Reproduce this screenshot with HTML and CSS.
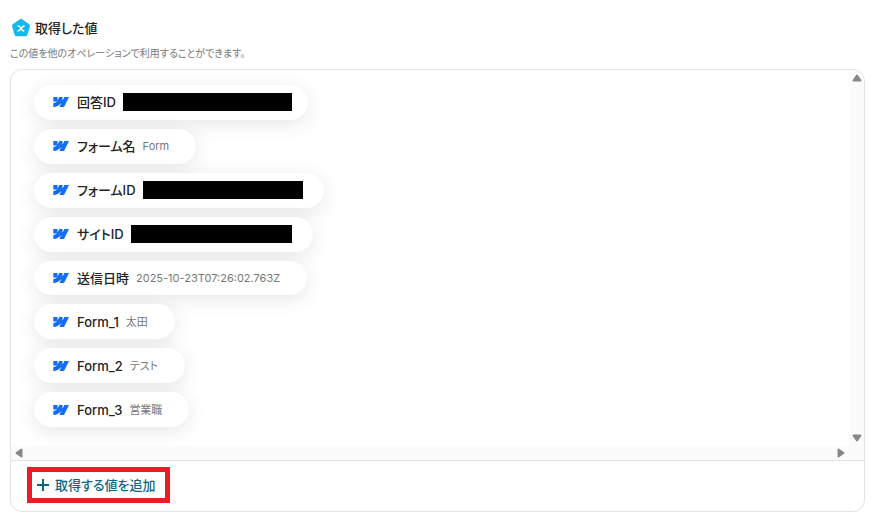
FILE: index.html
```
<!DOCTYPE html>
<html lang="ja">
<head>
    <meta charset="UTF-8">
    <meta name="viewport" content="width=device-width, initial-scale=1.0">
    <title>取得した値</title>
    <link rel="stylesheet" href="styles.css">
</head>
<body>
    <svg width="0" height="0" class="defs" aria-hidden="true">
        <symbol id="webflow" viewBox="0 0 16 10">
            <path d="M16 0 11 10H6.300L8.400 5.900H8.300C6.600 8.200 4 9.700 0.300 10V6C0.300 6 2.700 5.850 4.100 4.400H0.300V0H4.500V3.500H4.600L6.300 0H9.500V3.450H9.600L11.400 0Z"/>
        </symbol>
    </svg>

    <div class="output">
        <h2 class="title">
            <svg class="title-icon" viewBox="0 0 18 18">
                <path d="M9 2 16 7 13.400 15.300H4.600L2 7Z" fill="#15b8ec" stroke="#15b8ec" stroke-width="4" stroke-linejoin="round"/>
                <path d="M6.200 7C9 6.200 9 12.700 11.800 11.900M12 6.900C10 7.400 8 11.800 6 12" fill="none" stroke="#fff" stroke-width="1.500" stroke-linecap="round"/>
            </svg>
            取得した値
        </h2>
        <p class="description">この値を他のオペレーションで利用することができます。</p>

        <div class="panel">
            <div class="scroll-area">
                <ul class="values">
                    <li class="value">
                        <svg class="logo"><use href="#webflow"/></svg>
                        <span class="name">回答ID</span>
                        <span class="masked masked-answer"></span>
                    </li>
                    <li class="value">
                        <svg class="logo"><use href="#webflow"/></svg>
                        <span class="name">フォーム名</span>
                        <span class="sample">Form</span>
                    </li>
                    <li class="value">
                        <svg class="logo"><use href="#webflow"/></svg>
                        <span class="name">フォームID</span>
                        <span class="masked masked-form"></span>
                    </li>
                    <li class="value">
                        <svg class="logo"><use href="#webflow"/></svg>
                        <span class="name">サイトID</span>
                        <span class="masked masked-site"></span>
                    </li>
                    <li class="value">
                        <svg class="logo"><use href="#webflow"/></svg>
                        <span class="name">送信日時</span>
                        <span class="sample">2025-10-23T07:26:02.763Z</span>
                    </li>
                    <li class="value">
                        <svg class="logo"><use href="#webflow"/></svg>
                        <span class="name">Form_1</span>
                        <span class="sample">太田</span>
                    </li>
                    <li class="value">
                        <svg class="logo"><use href="#webflow"/></svg>
                        <span class="name">Form_2</span>
                        <span class="sample">テスト</span>
                    </li>
                    <li class="value">
                        <svg class="logo"><use href="#webflow"/></svg>
                        <span class="name">Form_3</span>
                        <span class="sample">営業職</span>
                    </li>
                </ul>
                <div class="track track-y">
                    <svg class="arrow" viewBox="0 0 10 8"><path d="M5 1.500 8.500 6.500H1.500Z"/></svg>
                    <svg class="arrow" viewBox="0 0 10 8"><path d="M5 6.500 8.500 1.500H1.500Z"/></svg>
                </div>
                <div class="track track-x">
                    <svg class="arrow" viewBox="0 0 8 10"><path d="M1.500 5 6.500 1.500V8.500Z"/></svg>
                    <svg class="arrow" viewBox="0 0 8 10"><path d="M6.500 5 1.500 1.500V8.500Z"/></svg>
                </div>
            </div>
            <div class="footer">
                <button type="button" class="add">
                    <svg class="plus" viewBox="0 0 12 12"><path d="M6 0V12M0 6H12"/></svg>
                    取得する値を追加
                </button>
            </div>
        </div>
    </div>
</body>
</html>
```

FILE: styles.css
```
* {
    box-sizing: border-box;
}

body {
    margin: 0;
    background-color: #fff;
    color: #222;
    font-family: Inter, "Noto Sans CJK JP", sans-serif;
    font-feature-settings: "palt";
}

.defs {
    position: absolute;
}

.output {
    padding: 18px 11px 10px 10px;
}

.title {
    display: flex;
    align-items: center;
    gap: 5px;
    margin: 0;
    padding-left: 2px;
    font-size: 13px;
    line-height: 20px;
    font-weight: 500;
}

.title-icon {
    width: 18px;
    height: 18px;
    overflow: visible;
}

.description {
    margin: 8px 0;
    font-size: 10px;
    line-height: 15px;
    color: #777;
}

.panel {
    overflow: hidden;
    border: 1px solid #e2e2e2;
    border-radius: 12px;
}

.scroll-area {
    display: grid;
    grid-template-columns: 1fr 15px;
    grid-template-rows: 376px 14px;
}

.values {
    display: grid;
    grid-auto-rows: 1fr;
    gap: 9px;
    justify-items: start;
    margin: 0;
    padding: 15px 23px 19px;
    overflow: hidden;
    list-style: none;
}

.value {
    display: flex;
    align-items: center;
    gap: 7px;
    padding: 0 27px 0 19px;
    border-radius: 18px;
    background-color: #fff;
    box-shadow: 0 4px 20px rgba(0, 0, 0, 0.1);
    white-space: nowrap;
}

.logo {
    width: 16px;
    height: 10px;
    margin-right: 1px;
    fill: #146ef5;
}

.name {
    font-size: 13px;
    line-height: 20px;
    font-weight: 500;
}

.sample {
    font-size: 11px;
    line-height: 20px;
    color: #777;
}

.masked {
    height: 18px;
    margin-right: -6px;
    background-color: #000;
}

.masked-answer {
    width: 169px;
    margin-right: -11px;
}

.masked-form {
    width: 160px;
}

.masked-site {
    width: 161px;
}

.track {
    display: flex;
    justify-content: space-between;
    align-items: center;
    background-color: #fbfbfb;
}

.track-y {
    flex-direction: column;
    padding: 4px 0;
}

.track-x {
    grid-column: 1 / -1;
    padding: 0 19px 0 4px;
}

.arrow {
    width: 10px;
    height: 8px;
    fill: #888;
    stroke: #888;
    stroke-width: 2;
    stroke-linejoin: round;
}

.track-x .arrow {
    width: 8px;
    height: 10px;
}

.footer {
    padding: 6px 16px 8px;
    border-top: 1px solid #e2e2e2;
}

.add {
    display: flex;
    align-items: center;
    gap: 6px;
    height: 36px;
    padding: 0 10px 0 5px;
    border: 5px solid #ed1c24;
    background-color: #fff;
    color: #0f6580;
    font: inherit;
    font-size: 13px;
    line-height: 20px;
    font-weight: 500;
    cursor: pointer;
}

.plus {
    width: 12px;
    height: 12px;
    stroke: #0f6580;
    stroke-width: 2;
}
```
